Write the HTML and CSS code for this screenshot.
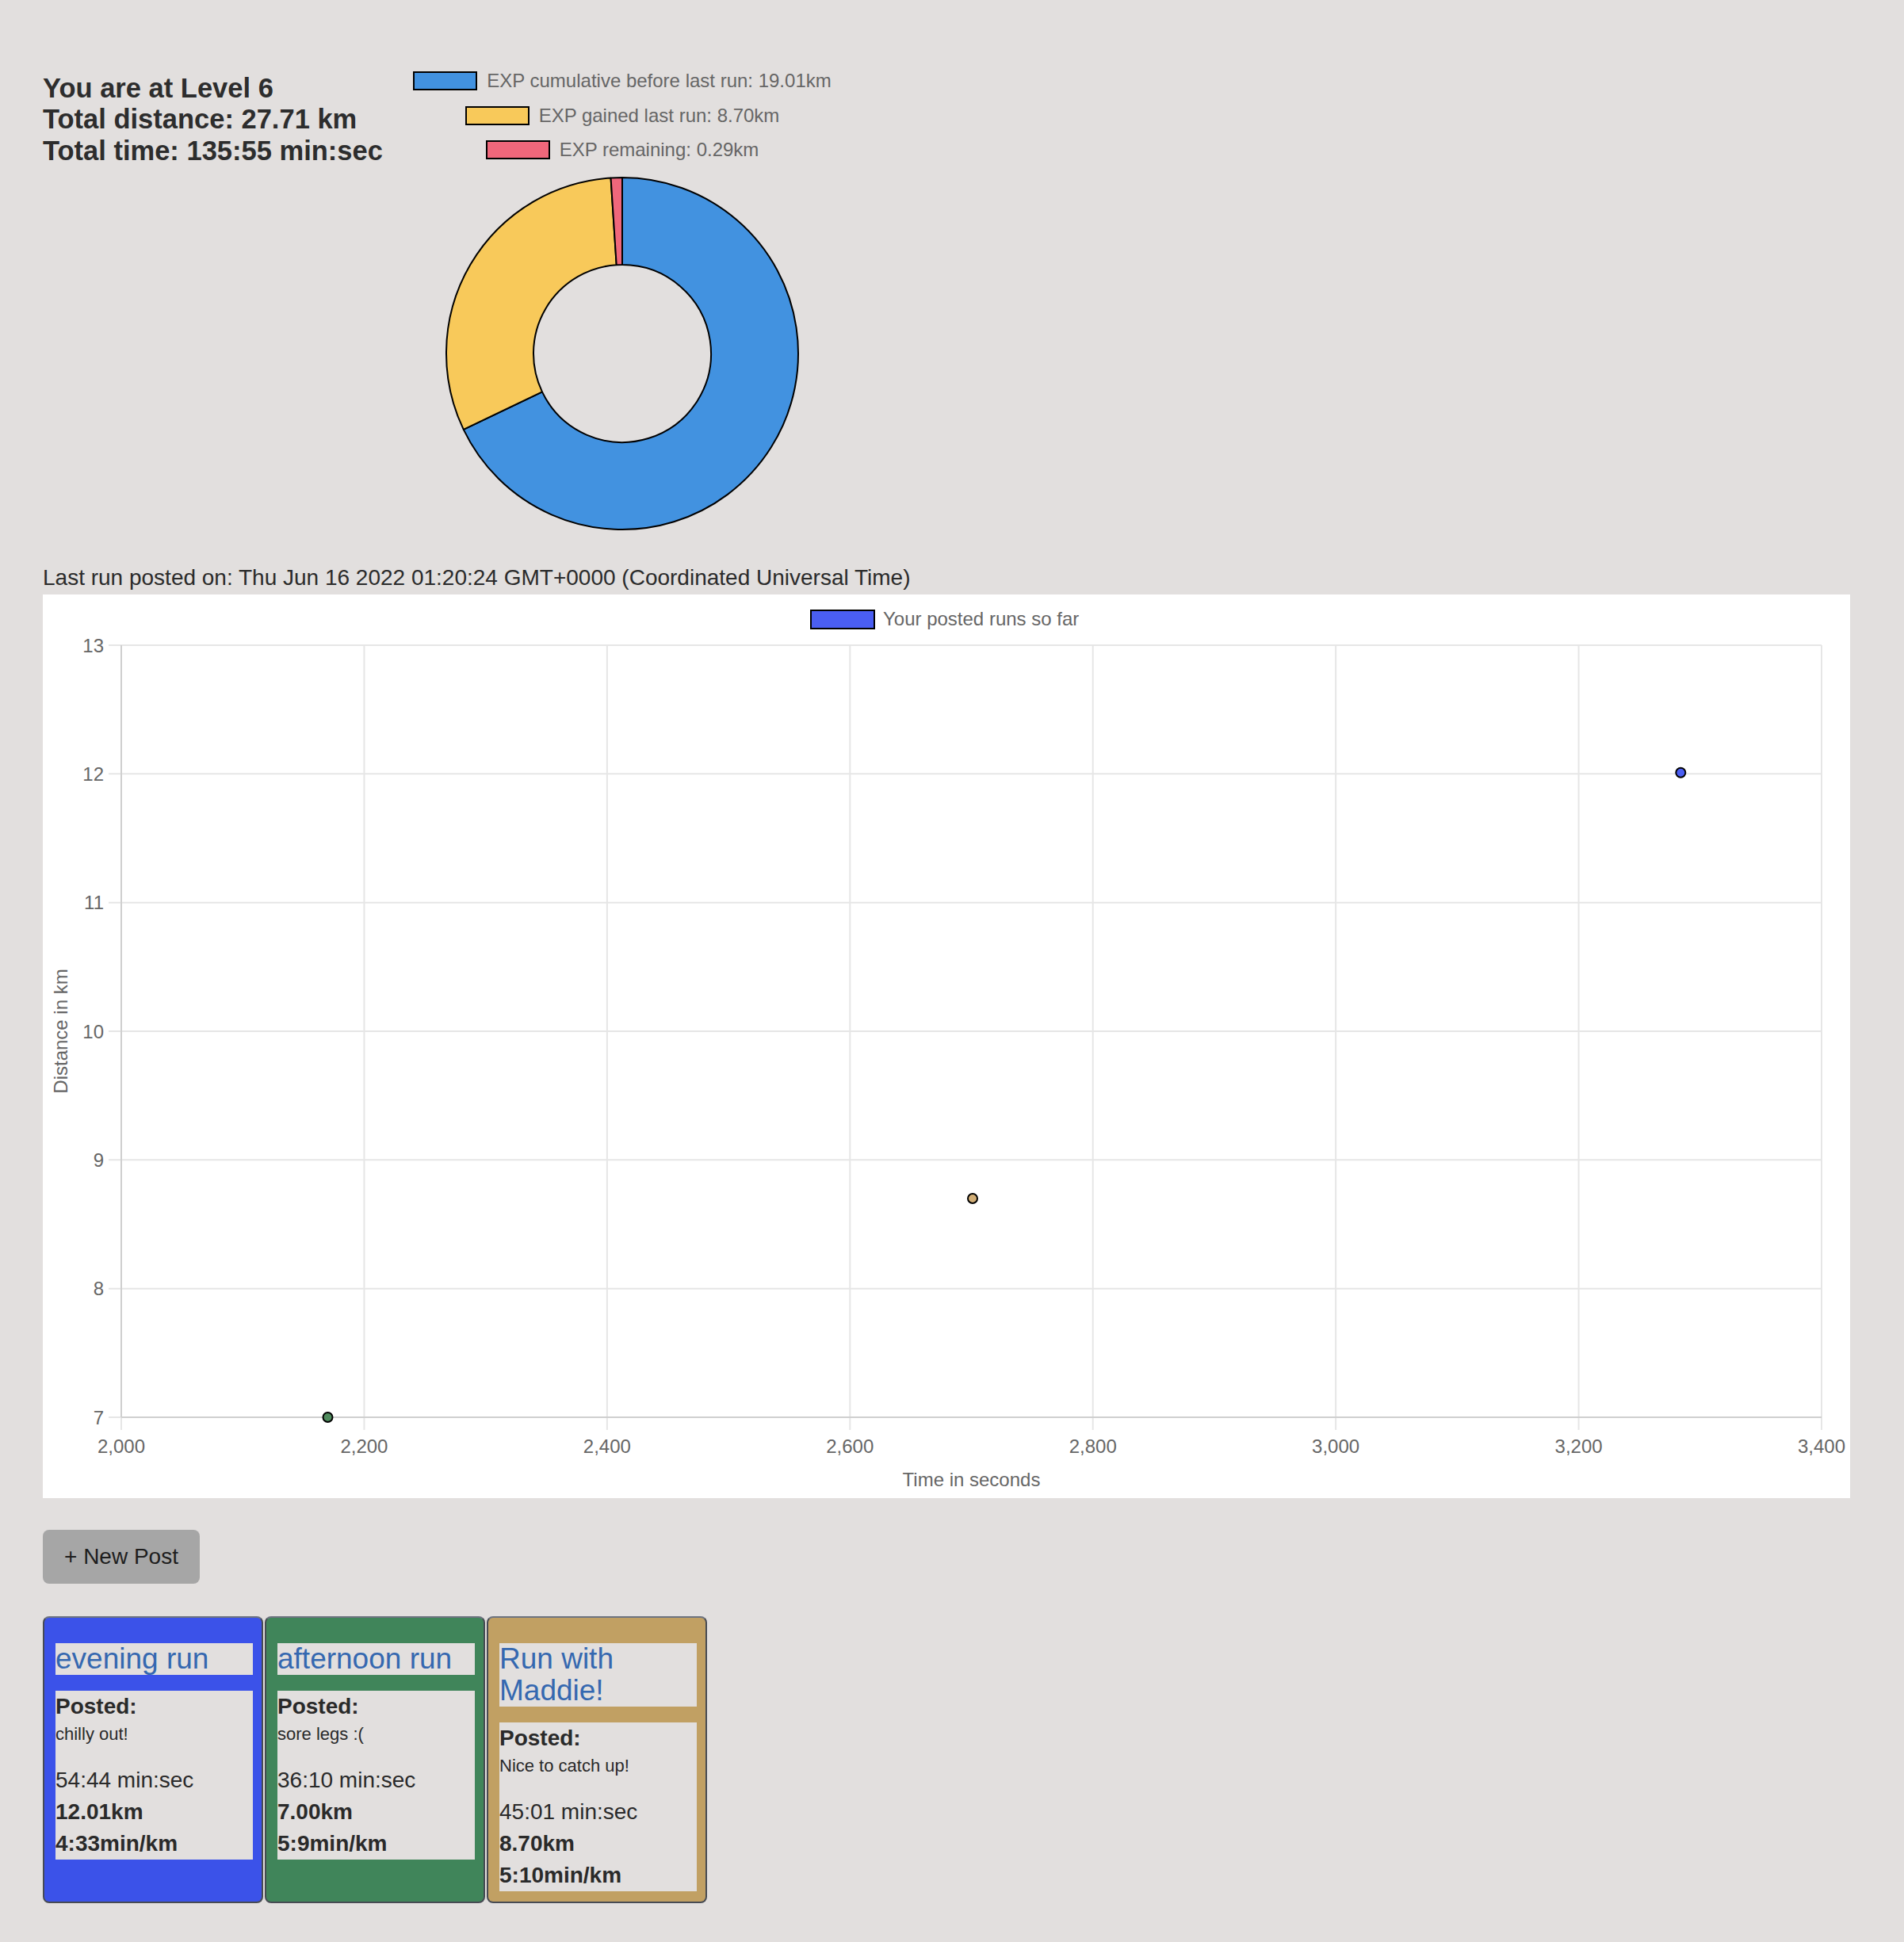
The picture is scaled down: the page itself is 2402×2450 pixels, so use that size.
FILE: index.html
```html
<!DOCTYPE html>
<html lang="en">
<head>
<meta charset="utf-8">
<title>Running Level</title>
<link rel="stylesheet" href="styles.css">
</head>
<body>
<div class="page">
  <section class="summary">
    <div class="stats">
      <div>You are at Level 6</div>
      <div>Total distance: 27.71 km</div>
      <div>Total time: 135:55 min:sec</div>
    </div>
    <div class="donut">
      <ul class="donut-legend">
        <li><span class="swatch sw-blue"></span>EXP cumulative before last run: 19.01km</li>
        <li><span class="swatch sw-yellow"></span>EXP gained last run: 8.70km</li>
        <li><span class="swatch sw-red"></span>EXP remaining: 0.29km</li>
      </ul>
      <svg class="donut-svg" width="600" height="448" viewBox="0 0 600 448">
        <path class="seg seg-blue" d="M300 2 A222 222 0 1 1 99.765 319.873 L198.98 272.368 A112 112 0 1 0 300 112 Z"/>
        <path class="seg seg-yellow" d="M99.765 319.873 A222 222 0 0 1 285.561 2.471 L292.716 112.237 A112 112 0 0 0 198.98 272.368 Z"/>
        <path class="seg seg-red" d="M285.561 2.471 A222 222 0 0 1 300 2 L300 112 A112 112 0 0 0 292.716 112.237 Z"/>
      </svg>
    </div>
  </section>

  <p class="last-run">Last run posted on: Thu Jun 16 2022 01:20:24 GMT+0000 (Coordinated Universal Time)</p>

  <div class="scatter">
    <svg width="2280" height="1140" viewBox="0 0 2280 1140">
      <rect class="legend-box" x="969" y="20" width="80" height="23"/>
      <text class="ct" x="1060" y="39">Your posted runs so far</text>

      <g class="grid">
        <line x1="405.43" y1="64" x2="405.43" y2="1054"/>
        <line x1="711.86" y1="64" x2="711.86" y2="1054"/>
        <line x1="1018.29" y1="64" x2="1018.29" y2="1054"/>
        <line x1="1324.71" y1="64" x2="1324.71" y2="1054"/>
        <line x1="1631.14" y1="64" x2="1631.14" y2="1054"/>
        <line x1="1937.57" y1="64" x2="1937.57" y2="1054"/>
        <line x1="2244" y1="64" x2="2244" y2="1054"/>
        <line x1="99" y1="1038" x2="99" y2="1054"/>
        <line x1="83" y1="64" x2="2244" y2="64"/>
        <line x1="83" y1="226.33" x2="2244" y2="226.33"/>
        <line x1="83" y1="388.67" x2="2244" y2="388.67"/>
        <line x1="83" y1="551" x2="2244" y2="551"/>
        <line x1="83" y1="713.33" x2="2244" y2="713.33"/>
        <line x1="83" y1="875.67" x2="2244" y2="875.67"/>
        <line x1="83" y1="1038" x2="99" y2="1038"/>
      </g>
      <g class="axis">
        <line x1="99" y1="64" x2="99" y2="1038"/>
        <line x1="99" y1="1038" x2="2244" y2="1038"/>
      </g>

      <g class="ct ylabels">
        <text x="77" y="72.5">13</text>
        <text x="77" y="234.8">12</text>
        <text x="77" y="397.2">11</text>
        <text x="77" y="559.5">10</text>
        <text x="77" y="721.8">9</text>
        <text x="77" y="884.2">8</text>
        <text x="77" y="1046.5">7</text>
      </g>
      <g class="ct xlabels">
        <text x="99" y="1083">2,000</text>
        <text x="405.43" y="1083">2,200</text>
        <text x="711.86" y="1083">2,400</text>
        <text x="1018.29" y="1083">2,600</text>
        <text x="1324.71" y="1083">2,800</text>
        <text x="1631.14" y="1083">3,000</text>
        <text x="1937.57" y="1083">3,200</text>
        <text x="2244" y="1083">3,400</text>
      </g>
      <text class="ct mid" x="1171.5" y="1125">Time in seconds</text>
      <text class="ct mid" transform="translate(31 551) rotate(-90)" x="0" y="0">Distance in km</text>

      <circle class="pt pt-blue" cx="2066.3" cy="224.7" r="6"/>
      <circle class="pt pt-green" cx="359.5" cy="1038" r="6"/>
      <circle class="pt pt-tan" cx="1173" cy="762" r="6"/>
    </svg>
  </div>

  <button class="new-post" type="button">+ New Post</button>

  <div class="cards">
    <article class="card card-blue">
      <h2 class="card-title">evening run</h2>
      <div class="card-body">
        <div class="posted">Posted:</div>
        <div class="note">chilly out!</div>
        <div class="line">54:44 min:sec</div>
        <div class="line strong">12.01km</div>
        <div class="line strong">4:33min/km</div>
      </div>
    </article>
    <article class="card card-green">
      <h2 class="card-title">afternoon run</h2>
      <div class="card-body">
        <div class="posted">Posted:</div>
        <div class="note">sore legs :(</div>
        <div class="line">36:10 min:sec</div>
        <div class="line strong">7.00km</div>
        <div class="line strong">5:9min/km</div>
      </div>
    </article>
    <article class="card card-tan">
      <h2 class="card-title">Run with Maddie!</h2>
      <div class="card-body">
        <div class="posted">Posted:</div>
        <div class="note">Nice to catch up!</div>
        <div class="line">45:01 min:sec</div>
        <div class="line strong">8.70km</div>
        <div class="line strong">5:10min/km</div>
      </div>
    </article>
  </div>
</div>
</body>
</html>
```

FILE: styles.css
```css
* {
  box-sizing: border-box;
}

html,
body {
  margin: 0;
  padding: 0;
}

body {
  background: #e2dfde;
  font-family: "Liberation Sans", Arial, Helvetica, sans-serif;
  color: #2b2b2b;
}

.page {
  padding: 70px 0 48px 54px;
}

/* ---------- summary row ---------- */
.summary {
  display: flex;
  align-items: flex-start;
}

.stats {
  flex: none;
  width: 431px;
  padding-top: 21.5px;
  font-size: 34.5px;
  font-weight: bold;
  line-height: 39.5px;
  white-space: nowrap;
  color: #2d2d2d;
}

.donut {
  flex: none;
  width: 600px;
  padding-top: 20px;
}

.donut-legend {
  list-style: none;
  margin: 0;
  padding: 0;
  display: flex;
  flex-direction: column;
  gap: 19.5px;
}

.donut-legend li {
  display: flex;
  align-items: center;
  justify-content: center;
  height: 24px;
  font-size: 24px;
  line-height: 24px;
  color: #666;
  white-space: nowrap;
}

.swatch {
  flex: none;
  width: 81px;
  height: 24px;
  border: 2px solid #000;
  margin-right: 12px;
}

.sw-blue { background: #4292e0; }
.sw-yellow { background: #f8c95a; }
.sw-red { background: #f0677b; }

.donut-svg {
  display: block;
  margin-top: 21px;
}

.seg {
  stroke: #000;
  stroke-width: 2;
  stroke-linejoin: bevel;
}

.seg-blue { fill: #4292e0; }
.seg-yellow { fill: #f8c95a; }
.seg-red { fill: #f0677b; }

/* ---------- last run ---------- */
.last-run {
  margin: 43px 0 5px;
  font-size: 28px;
  line-height: 32px;
  white-space: nowrap;
}

/* ---------- scatter chart ---------- */
.scatter {
  width: 2280px;
  height: 1140px;
  background: #fff;
}

.scatter svg {
  display: block;
}

.ct {
  font-family: "Liberation Sans", Arial, Helvetica, sans-serif;
  font-size: 24px;
  fill: #666;
}

.ylabels text {
  text-anchor: end;
}

.xlabels text,
.mid {
  text-anchor: middle;
}

.legend-box {
  fill: #4a5ef2;
  stroke: #000;
  stroke-width: 2;
}

.grid line {
  stroke: #e6e6e6;
  stroke-width: 2;
}

.axis line {
  stroke: #cfcfcf;
  stroke-width: 2;
}

.pt {
  stroke: #000;
  stroke-width: 2;
}

.pt-blue { fill: #4a5ef2; }
.pt-green { fill: #4f8b5d; }
.pt-tan { fill: #d2ae76; }

/* ---------- new post button ---------- */
.new-post {
  display: block;
  margin-top: 40px;
  width: 198px;
  height: 68px;
  padding: 0;
  border: none;
  border-radius: 8px;
  background: #a6a6a6;
  color: #1e1e1e;
  font-family: "Liberation Sans", Arial, Helvetica, sans-serif;
  font-size: 28px;
  line-height: 68px;
  text-align: center;
}

/* ---------- cards ---------- */
.cards {
  display: flex;
  align-items: stretch;
  gap: 2px;
  margin-top: 41px;
}

.card {
  flex: none;
  width: 278px;
  padding: 32px 11px 13px 14px;
  border: 2px solid #474b53;
  border-top-color: #6d7380;
  border-radius: 8px;
}

.card-blue { background: #3b52e9; }
.card-green { background: #40855a; }
.card-tan { background: #c1a063; }

.card-title {
  margin: 0 0 20px;
  background: #e2dfde;
  color: #3568b0;
  font-size: 37px;
  font-weight: normal;
  line-height: 40px;
}

.card-body {
  background: #e2dfde;
  color: #2a2a2a;
}

.posted {
  font-size: 28px;
  font-weight: bold;
  line-height: 40px;
}

.note {
  font-size: 22px;
  line-height: 30px;
  margin-bottom: 23px;
}

.line {
  font-size: 28px;
  line-height: 40px;
}

.strong {
  font-weight: bold;
}
```
